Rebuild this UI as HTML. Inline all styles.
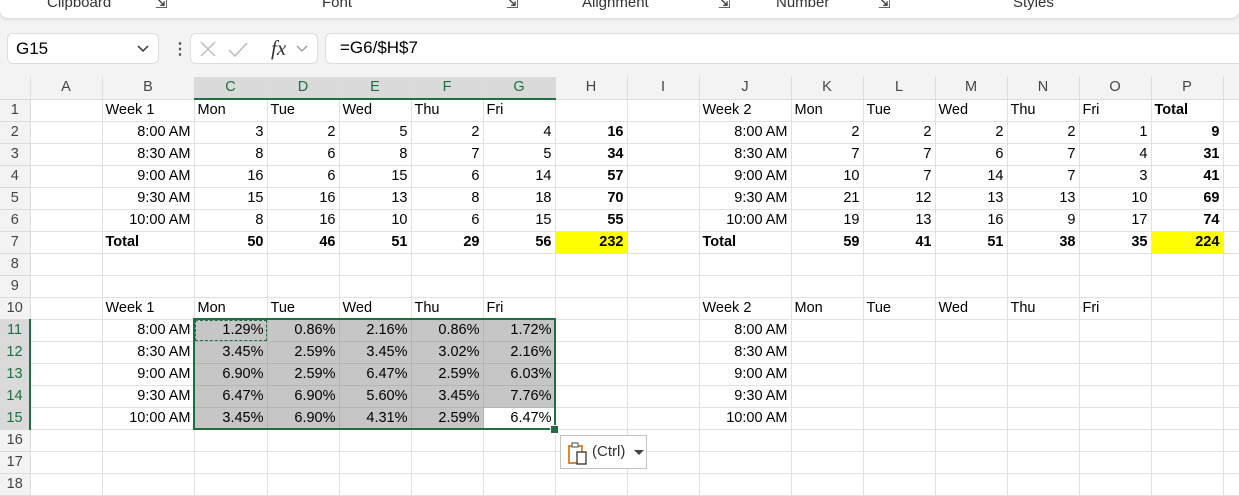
<!DOCTYPE html>
<html><head><meta charset="utf-8"><style>
body{margin:0;width:1239px;height:493px;overflow:hidden;background:#f3f3f3;font-family:"Liberation Sans",sans-serif;position:relative}
.rib{position:absolute;left:0;top:-10px;width:1239px;height:28px;background:#fff;border-radius:0 0 8px 8px;box-shadow:0 1px 3px rgba(0,0,0,.15)}
.rl{position:absolute;top:4px;font-size:15px;color:#333}
.box{position:absolute;top:33px;height:31px;background:#fff;border:1px solid #ddd;border-radius:6px;box-sizing:border-box}
table{position:absolute;left:0;top:77px;width:1253px;border-collapse:collapse;table-layout:fixed;font-size:14.5px;color:#000}
td{border-right:1px solid #e1e1e1;border-bottom:1px solid #e1e1e1;height:21px;padding:0 3px;white-space:nowrap;overflow:hidden;background:#fff;line-height:21px}
tr.h td{background:#f3f3f3;text-align:center;color:#444;height:20px;border-color:#dcdcdc}
td.r{background:#f3f3f3;text-align:center;color:#444;padding:0;border-color:#dcdcdc}
.n{text-align:right}.b{font-weight:bold}.y{background:#ffff00}
tr.h td.s{background:#dadada;color:#1e6e42;border-bottom:2px solid #1e6e42}
td.rs{background:#dadada!important;color:#1e6e42!important;border-right:2px solid #1e6e42!important}
td.g{background:#c6c6c6;border-color:#b4b4b4}
</style></head><body>
<div class="rib">
<span class="rl" style="left:47px">Clipboard</span><span class="rl" style="left:155px">⇲</span>
<span class="rl" style="left:322px">Font</span><span class="rl" style="left:506px">⇲</span>
<span class="rl" style="left:582px">Alignment</span><span class="rl" style="left:718px">⇲</span>
<span class="rl" style="left:776px">Number</span><span class="rl" style="left:878px">⇲</span>
<span class="rl" style="left:1013px">Styles</span>
</div>
<div class="box" style="left:7px;width:152px"><span style="position:absolute;left:8px;top:5px;font-size:17px">G15</span>
<svg style="position:absolute;left:128px;top:10px" width="14" height="10"><path d="M2 2 L7 7 L12 2" stroke="#333" stroke-width="1.5" fill="none"/></svg></div>
<div style="position:absolute;left:172px;top:39px;width:4px;height:20px;font-size:16px;color:#555;font-weight:bold">⋮</div>
<div class="box" style="left:190px;width:128px">
<svg style="position:absolute;left:8px;top:6px" width="110" height="20"><path d="M2 2 L16 16 M16 2 L2 16" stroke="#bbb" stroke-width="1.5"/><path d="M30 10 L36 16 L48 3" stroke="#bbb" stroke-width="1.5" fill="none"/><path d="M108 6 L103 11 L98 6" stroke="#999" stroke-width="1.3" fill="none"/></svg>
<span style="position:absolute;left:80px;top:2px;font-family:'Liberation Serif',serif;font-style:italic;font-size:21px;color:#333">fx</span></div>
<div class="box" style="left:325px;width:930px"><span style="position:absolute;left:14px;top:4px;font-size:17px">=G6/$H$7</span></div>
<table>
<colgroup><col style="width:30px"><col style="width:72px"><col style="width:92px"><col style="width:73px"><col style="width:72px"><col style="width:72px"><col style="width:72px"><col style="width:72px"><col style="width:72px"><col style="width:72px"><col style="width:92px"><col style="width:72px"><col style="width:72px"><col style="width:72px"><col style="width:72px"><col style="width:72px"><col style="width:72px"><col style="width:30px"></colgroup>
<tr class="h"><td style="background:#f3f3f3"></td><td>A</td><td>B</td><td class="s">C</td><td class="s">D</td><td class="s">E</td><td class="s">F</td><td class="s">G</td><td>H</td><td>I</td><td>J</td><td>K</td><td>L</td><td>M</td><td>N</td><td>O</td><td>P</td><td></td></tr>
<tr><td class="r">1</td><td></td><td>Week 1</td><td>Mon</td><td>Tue</td><td>Wed</td><td>Thu</td><td>Fri</td><td></td><td></td><td>Week 2</td><td>Mon</td><td>Tue</td><td>Wed</td><td>Thu</td><td>Fri</td><td class="b">Total</td><td></td></tr>
<tr><td class="r">2</td><td></td><td class="n">8:00 AM</td><td class="n">3</td><td class="n">2</td><td class="n">5</td><td class="n">2</td><td class="n">4</td><td class="n b">16</td><td></td><td class="n">8:00 AM</td><td class="n">2</td><td class="n">2</td><td class="n">2</td><td class="n">2</td><td class="n">1</td><td class="n b">9</td><td></td></tr>
<tr><td class="r">3</td><td></td><td class="n">8:30 AM</td><td class="n">8</td><td class="n">6</td><td class="n">8</td><td class="n">7</td><td class="n">5</td><td class="n b">34</td><td></td><td class="n">8:30 AM</td><td class="n">7</td><td class="n">7</td><td class="n">6</td><td class="n">7</td><td class="n">4</td><td class="n b">31</td><td></td></tr>
<tr><td class="r">4</td><td></td><td class="n">9:00 AM</td><td class="n">16</td><td class="n">6</td><td class="n">15</td><td class="n">6</td><td class="n">14</td><td class="n b">57</td><td></td><td class="n">9:00 AM</td><td class="n">10</td><td class="n">7</td><td class="n">14</td><td class="n">7</td><td class="n">3</td><td class="n b">41</td><td></td></tr>
<tr><td class="r">5</td><td></td><td class="n">9:30 AM</td><td class="n">15</td><td class="n">16</td><td class="n">13</td><td class="n">8</td><td class="n">18</td><td class="n b">70</td><td></td><td class="n">9:30 AM</td><td class="n">21</td><td class="n">12</td><td class="n">13</td><td class="n">13</td><td class="n">10</td><td class="n b">69</td><td></td></tr>
<tr><td class="r">6</td><td></td><td class="n">10:00 AM</td><td class="n">8</td><td class="n">16</td><td class="n">10</td><td class="n">6</td><td class="n">15</td><td class="n b">55</td><td></td><td class="n">10:00 AM</td><td class="n">19</td><td class="n">13</td><td class="n">16</td><td class="n">9</td><td class="n">17</td><td class="n b">74</td><td></td></tr>
<tr><td class="r">7</td><td></td><td class="b">Total</td><td class="n b">50</td><td class="n b">46</td><td class="n b">51</td><td class="n b">29</td><td class="n b">56</td><td class="n b y">232</td><td></td><td class="b">Total</td><td class="n b">59</td><td class="n b">41</td><td class="n b">51</td><td class="n b">38</td><td class="n b">35</td><td class="n b y">224</td><td></td></tr>
<tr><td class="r">8</td><td></td><td></td><td></td><td></td><td></td><td></td><td></td><td></td><td></td><td></td><td></td><td></td><td></td><td></td><td></td><td></td><td></td></tr>
<tr><td class="r">9</td><td></td><td></td><td></td><td></td><td></td><td></td><td></td><td></td><td></td><td></td><td></td><td></td><td></td><td></td><td></td><td></td><td></td></tr>
<tr><td class="r">10</td><td></td><td>Week 1</td><td>Mon</td><td>Tue</td><td>Wed</td><td>Thu</td><td>Fri</td><td></td><td></td><td>Week 2</td><td>Mon</td><td>Tue</td><td>Wed</td><td>Thu</td><td>Fri</td><td></td><td></td></tr>
<tr><td class="r rs">11</td><td></td><td class="n">8:00 AM</td><td class="n g">1.29%</td><td class="n g">0.86%</td><td class="n g">2.16%</td><td class="n g">0.86%</td><td class="n g">1.72%</td><td></td><td></td><td class="n">8:00 AM</td><td></td><td></td><td></td><td></td><td></td><td></td><td></td></tr>
<tr><td class="r rs">12</td><td></td><td class="n">8:30 AM</td><td class="n g">3.45%</td><td class="n g">2.59%</td><td class="n g">3.45%</td><td class="n g">3.02%</td><td class="n g">2.16%</td><td></td><td></td><td class="n">8:30 AM</td><td></td><td></td><td></td><td></td><td></td><td></td><td></td></tr>
<tr><td class="r rs">13</td><td></td><td class="n">9:00 AM</td><td class="n g">6.90%</td><td class="n g">2.59%</td><td class="n g">6.47%</td><td class="n g">2.59%</td><td class="n g">6.03%</td><td></td><td></td><td class="n">9:00 AM</td><td></td><td></td><td></td><td></td><td></td><td></td><td></td></tr>
<tr><td class="r rs">14</td><td></td><td class="n">9:30 AM</td><td class="n g">6.47%</td><td class="n g">6.90%</td><td class="n g">5.60%</td><td class="n g">3.45%</td><td class="n g">7.76%</td><td></td><td></td><td class="n">9:30 AM</td><td></td><td></td><td></td><td></td><td></td><td></td><td></td></tr>
<tr><td class="r rs">15</td><td></td><td class="n">10:00 AM</td><td class="n g">3.45%</td><td class="n g">6.90%</td><td class="n g">4.31%</td><td class="n g">2.59%</td><td class="n">6.47%</td><td></td><td></td><td class="n">10:00 AM</td><td></td><td></td><td></td><td></td><td></td><td></td><td></td></tr>
<tr><td class="r">16</td><td></td><td></td><td></td><td></td><td></td><td></td><td></td><td></td><td></td><td></td><td></td><td></td><td></td><td></td><td></td><td></td><td></td></tr>
<tr><td class="r">17</td><td></td><td></td><td></td><td></td><td></td><td></td><td></td><td></td><td></td><td></td><td></td><td></td><td></td><td></td><td></td><td></td><td></td></tr>
<tr><td class="r">18</td><td></td><td></td><td></td><td></td><td></td><td></td><td></td><td></td><td></td><td></td><td></td><td></td><td></td><td></td><td></td><td></td><td></td></tr>
</table>
<div style="position:absolute;left:193px;top:318px;width:359px;height:108px;border:2px solid #1e6e42"></div>
<div style="position:absolute;left:195px;top:320px;width:70px;height:19px;border:1.5px dashed #1e6e42"></div>
<div style="position:absolute;left:550px;top:425px;width:7px;height:7px;background:#1e6e42;border:1px solid #fff"></div>
<div style="position:absolute;left:560px;top:435px;width:87px;height:34px;background:#fff;border:1px solid #c4c4c4;box-sizing:border-box">
<svg style="position:absolute;left:7px;top:6px" width="24" height="24"><rect x="1" y="4" width="13" height="17" fill="none" stroke="#d87c1e" stroke-width="1.8"/><rect x="4" y="1" width="6" height="4" fill="#fff" stroke="#666" stroke-width="1.2"/><rect x="9" y="10" width="9" height="12" fill="#fff" stroke="#333" stroke-width="1.3"/></svg>
<span style="position:absolute;left:31px;top:7px;font-size:15px;color:#333">(Ctrl)</span>
<svg style="position:absolute;left:73px;top:14px" width="10" height="6"><path d="M0 0 L10 0 L5 5Z" fill="#444"/></svg></div>
</body></html>
